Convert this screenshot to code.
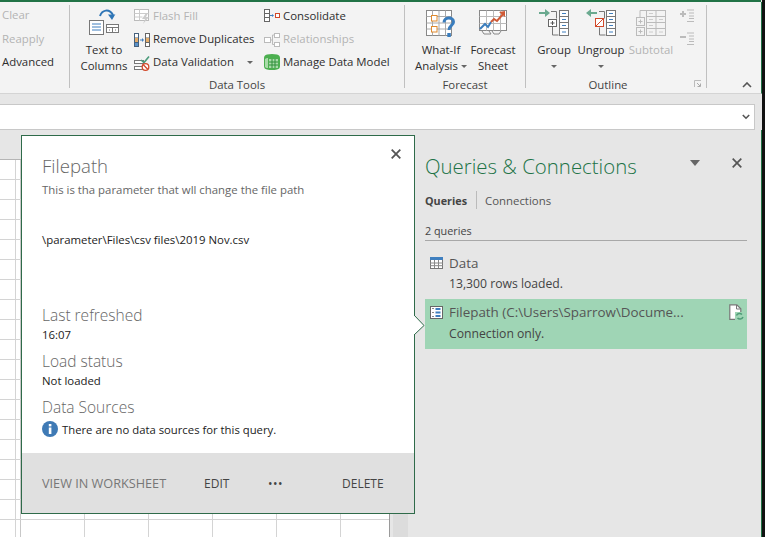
<template>
  <div class="app">
    <div class="topline"></div>
    <div class="ribbon">
      <section class="grp g-sort">
        <span class="off">Clear</span>
        <span class="off">Reapply</span>
        <span>Advanced</span>
      </section>

      <section class="grp g-tools">
        <div class="grp-body">
          <div class="big ttc">
            <svg viewBox="89 8 31 27" width="31" height="27">
              <rect x="89.5" y="19.5" width="14" height="14" fill="#fff" stroke="#777"/>
              <path d="M92 23h9M92 26h9M92 29h9" stroke="#3f7fbf" fill="none"/>
              <rect x="106.5" y="23.5" width="12" height="8" fill="#fff" stroke="#777"/>
              <path d="M106.5 26.5h12M112.5 26.5v5M109 29h1M115 29h1" stroke="#777" fill="none"/>
              <path d="M100 15c2-6 9-8 13-1" stroke="#2e75b6" stroke-width="2" fill="none"/>
              <path d="M108 13.5h7.5v-.5L112 19z" fill="#2e75b6"/>
            </svg>
            <span class="lb">Text to<br>Columns</span>
          </div>
          <div class="col col-a">
            <div class="row off">
              <svg viewBox="134 8 16 16" width="16" height="16">
                <rect x="134.5" y="8.5" width="14" height="11" fill="#fff" stroke="#bbb"/>
                <path d="M134.5 12.5h14M134.5 16h8M139.5 8.5v11" stroke="#ccc" fill="none"/>
                <path d="M146 12l-4 6h3l-2 5 6-7h-3l2-4z" fill="#ccc"/>
              </svg>
              <span>Flash Fill</span>
            </div>
            <div class="row">
              <svg viewBox="134 30 16 16" width="16" height="16">
                <rect x="134" y="31" width="5" height="14" fill="#46617d"/>
                <rect x="145" y="31" width="5" height="14" fill="#666"/>
                <rect x="135" y="32" width="3" height="3.5" fill="#fff"/>
                <rect x="135" y="36" width="3" height="4" fill="#e5ad6a"/>
                <rect x="135" y="41" width="3" height="3" fill="#5b92c9"/>
                <rect x="146" y="32" width="3" height="3.5" fill="#fff"/>
                <rect x="146" y="36" width="3" height="4" fill="#e5ad6a"/>
                <rect x="146" y="41" width="3" height="3" fill="#fff"/>
                <path d="M140 38h3" stroke="#3f7fbf"/>
                <path d="M142 36l2 2-2 2z" fill="#3f7fbf"/>
              </svg>
              <span>Remove Duplicates</span>
            </div>
            <div class="row">
              <svg viewBox="134 53 16 16" width="16" height="16">
                <rect x="134.5" y="58.5" width="9" height="3" fill="#fff" stroke="#777"/>
                <rect x="134.5" y="64.5" width="8" height="3" fill="#fff" stroke="#777"/>
                <path d="M141 58l3 2.500 5-6" stroke="#4c9c7c" stroke-width="1.600" fill="none"/>
                <circle cx="145.500" cy="65" r="3.300" fill="#fff" stroke="#d2492a" stroke-width="1.300"/>
                <path d="M143.300 62.800l4.400 4.400" stroke="#d2492a" stroke-width="1.300"/>
              </svg>
              <span>Data Validation</span>
              <i class="caret dv"></i>
            </div>
          </div>
          <div class="col col-b">
            <div class="row">
              <svg viewBox="264 8 16 16" width="16" height="16">
                <rect x="264.500" y="8.500" width="5" height="4" fill="#fff" stroke="#666"/>
                <rect x="264.500" y="12.500" width="5" height="4" fill="#fff" stroke="#666"/>
                <rect x="264.500" y="16.500" width="5" height="4" fill="#fff" stroke="#666"/>
                <path d="M270 14.500h2" stroke="#3f7fbf"/>
                <path d="M272 13l2 1.500-2 1.500z" fill="#3f7fbf"/>
                <rect x="275.500" y="12.500" width="4" height="4" fill="#fff" stroke="#d2492a"/>
              </svg>
              <span>Consolidate</span>
            </div>
            <div class="row off">
              <svg viewBox="264 30 16 16" width="16" height="16">
                <rect x="264.500" y="35.500" width="6" height="5" fill="#fff" stroke="#bbb"/>
                <rect x="274.500" y="31.500" width="5" height="4" fill="#fff" stroke="#bbb"/>
                <rect x="274.500" y="40.500" width="5" height="4" fill="#fff" stroke="#bbb"/>
                <path d="M270.500 38h2v-5h2M272.500 38v4.500h2" stroke="#bbb" fill="none"/>
              </svg>
              <span>Relationships</span>
            </div>
            <div class="row">
              <svg viewBox="264 53 16 17" width="16" height="17">
                <path d="M264 57q0-3 3-3.500 5-1 10 0 3 .5 3 3.500v8q0 3-3 3.500-5 1-10 0-3-.5-3-3.500z" fill="#4caf50"/>
                <path d="M269 58h9v9h-9z" fill="#a9dba9"/>
                <path d="M269 61h9M269 64h9M272 58v9M275 58v9" stroke="#2f8f3a" fill="none"/>
                <path d="M265 58c1-1 2-1 3-1v10c-1 0-2 0-3-1z" fill="#a9dba9"/>
              </svg>
              <span>Manage Data Model</span>
            </div>
          </div>
        </div>
        <div class="grp-title">Data Tools</div>
      </section>

      <section class="grp g-fore">
        <div class="grp-body">
          <div class="big whatif">
            <svg viewBox="428 9 30 31" width="30" height="31">
              <rect x="428.500" y="10.500" width="25" height="25" fill="#fff" stroke="#888"/>
              <path d="M428.500 16.500h25M428.500 23h25M428.500 29h25M434.500 10.500v25M441 10.500v25M447.500 10.500v25" stroke="#aaa" fill="none"/>
              <rect x="433.500" y="15.500" width="5.500" height="5.500" fill="#fff" stroke="#e08a2e"/>
              <rect x="433.500" y="26.500" width="5.500" height="5.500" fill="#fff" stroke="#e08a2e"/>
              <path d="M446 22.500c0-6 9.500-6 9.500-.5 0 3.500-4.500 3.500-4.500 8" stroke="#3a7dbd" stroke-width="3" fill="none"/>
              <rect x="449.300" y="33" width="3.500" height="4" fill="#3a7dbd"/>
            </svg>
            <span class="lb">What-If<br>Analysis<i class="caret inl"></i></span>
          </div>
          <div class="big forecast">
            <svg viewBox="479 9 29 27" width="29" height="27">
              <rect x="479.500" y="10.500" width="27" height="20" fill="#fff" stroke="#888"/>
              <path d="M479.500 16.500h27M479.500 23.500h27M486.500 10.500v20M493.500 10.500v20M500.500 10.500v20" stroke="#bbb" fill="none"/>
              <path d="M480 29l5-5 3 3 3-5" stroke="#3a7dbd" stroke-width="2" fill="none"/>
              <path d="M491 22l3-3 3 2 7-8" stroke="#cf5a37" stroke-width="2" fill="none"/>
              <path d="M499 12l6-1v6z" fill="#cf5a37"/>
              <path d="M482 31l2 3h7l-2-3M492 31l2 3h5l2-3" stroke="#888" fill="none"/>
            </svg>
            <span class="lb">Forecast<br>Sheet</span>
          </div>
        </div>
        <div class="grp-title">Forecast</div>
      </section>

      <section class="grp g-outline">
        <div class="grp-body">
          <div class="big group">
            <svg viewBox="539 9 30 27" width="30" height="27">
              <path d="M539 13h9" stroke="#6aa98f" stroke-width="2"/>
              <path d="M545 9l5 4-5 4z" fill="#6aa98f"/>
              <path d="M551 11.500h5.500v7M552.500 26.500v8.500h6" stroke="#777" fill="none"/>
              <rect x="548.500" y="19.500" width="8" height="7" fill="#fff" stroke="#666"/>
              <path d="M550.500 23h4M552.500 21v4" stroke="#555"/>
              <rect x="559.500" y="10.500" width="9" height="25" fill="#fff" stroke="#777"/>
              <path d="M559.500 16.500h9M559.500 22.500h9M559.500 28.500h9" stroke="#777"/>
              <path d="M562 13.500h4M562 19.500h4M562 25.500h4M562 32h4" stroke="#3f7fbf"/>
            </svg>
            <span class="lb">Group</span>
            <i class="caret under"></i>
          </div>
          <div class="big ungroup">
            <svg viewBox="587 9 31 27" width="31" height="27">
              <path d="M589 13h9" stroke="#6aa98f" stroke-width="2"/>
              <path d="M592 9l-5 4 5 4z" fill="#6aa98f"/>
              <path d="M600 11.500h5.500v7M600.500 27.500v7.500h6" stroke="#777" fill="none"/>
              <rect x="596.500" y="18.500" width="8" height="8" fill="#fff" stroke="#d2492a"/>
              <path d="M597 26l7-7" stroke="#d2492a"/>
              <rect x="607.500" y="10.500" width="9" height="25" fill="#fff" stroke="#777"/>
              <path d="M607.500 16.500h9M607.500 22.500h9M607.500 28.500h9" stroke="#777"/>
              <path d="M610 13.500h4M610 19.500h4M610 25.500h4M610 32h4" stroke="#3f7fbf"/>
            </svg>
            <span class="lb">Ungroup</span>
            <i class="caret under"></i>
          </div>
          <div class="big subtotal off">
            <svg viewBox="637 9 30 28" width="30" height="28">
              <rect x="637.500" y="17.500" width="8" height="8" fill="#f3f3f3" stroke="#bbb"/>
              <rect x="637.500" y="27.500" width="8" height="8" fill="#f3f3f3" stroke="#bbb"/>
              <path d="M639.500 21.500h4M641.500 19.500v4M639.500 31.500h4M641.500 29.500v4M641 10.500h6M641 17v-6.500" stroke="#bbb" fill="none"/>
              <rect x="647.500" y="10.500" width="19" height="25" fill="#f3f3f3" stroke="#bbb"/>
              <path d="M647.500 16.500h19M647.500 22.500h19M647.500 28.500h19M657 10.500v25" stroke="#bbb" fill="none"/>
              <path d="M650 13.500h4M660 19.500h4M650 25.500h4M660 32h4M650 19.500h4M650 32h4" stroke="#ccc"/>
            </svg>
            <span class="lb">Subtotal</span>
          </div>
          <div class="mini">
            <svg viewBox="681 8 15 14" width="15" height="14">
              <path d="M681 13h6M684 10v6" stroke="#bbb" stroke-width="2"/>
              <path d="M688 9h7M690 12h5M690 15h5M690 17.500h5M688 20.500h7" stroke="#bbb"/>
            </svg>
            <svg viewBox="681 31 15 14" width="15" height="14">
              <path d="M681 36h6" stroke="#bbb" stroke-width="2"/>
              <path d="M688 32h7M690 35h5M690 38h5M690 40.500h5M688 43.500h7" stroke="#bbb"/>
            </svg>
          </div>
        </div>
        <div class="grp-title outline-title">Outline</div>
        <svg class="launcher" viewBox="0 0 8 8" width="8" height="8">
          <path d="M.5 7V.5H7" stroke="#bbb" fill="none"/>
          <path d="M3 3l3 3M6.500 3.500v3h-3" stroke="#aaa" fill="none"/>
        </svg>
      </section>

      <div class="collapse">
        <svg viewBox="0 0 10 6" width="10" height="6"><path d="M1 5l4-4 4 4" stroke="#555" stroke-width="1.600" fill="none"/></svg>
      </div>
    </div>

    <div class="gap"></div>
    <div class="fbar">
      <div class="fbar-in">
        <svg viewBox="0 0 8 6" width="8" height="6"><path d="M.8 1l3.200 3.200L7.200 1" stroke="#555" stroke-width="1.600" fill="none"/></svg>
      </div>
    </div>

    <main class="work">
      <div class="sheet">
        <div class="cols"></div>
        <div class="cells"></div>
        <div class="vscroll"><div class="thumb"></div></div>
      </div>

      <aside class="panel">
        <div class="p-head">
          <h1>Queries &amp; Connections</h1>
          <i class="p-drop"></i>
          <svg class="p-x" viewBox="0 0 10 10" width="10" height="10"><path d="M.7.7l8.600 8.600M9.300.7L.7 9.300" stroke="#555" stroke-width="1.700"/></svg>
        </div>
        <div class="tabs">
          <b>Queries</b>
          <i></i>
          <span>Connections</span>
        </div>
        <div class="count">2 queries</div>
        <div class="item first">
          <div class="i-top">
            <svg viewBox="0 0 13 12" width="13" height="12">
              <rect x=".5" y=".5" width="12" height="11" fill="#fff" stroke="#777"/>
              <rect x="0" y="0" width="13" height="3" fill="#3f7fbf"/>
              <path d="M4.500 3v8M8.500 3v8M0 6h13M0 8.700h13" stroke="#888"/>
            </svg>
            <span class="i-name">Data</span>
          </div>
          <div class="i-sub">13,300 rows loaded.</div>
        </div>
        <div class="item sel">
          <div class="i-top">
            <svg viewBox="0 0 13 13" width="13" height="13">
              <rect x=".5" y=".5" width="12" height="12" fill="#fff" stroke="#666"/>
              <path d="M5.500 3h5M5.500 6.500h5M5.500 10h5" stroke="#3f7fbf" stroke-width="2"/>
              <path d="M2 2.500h2M2 6.500h2M2 10.500h2" stroke="#888"/>
            </svg>
            <span class="i-name">Filepath (C:\Users\Sparrow\Docume...</span>
          </div>
          <div class="i-sub">Connection only.</div>
          <svg class="doc" viewBox="0 0 15 17" width="15" height="17">
            <path d="M.8.800h7l4 4v10.500H.8z" fill="#fff" stroke="#777" stroke-width="1.200"/>
            <path d="M7.500 1v4h4" fill="none" stroke="#777"/>
            <rect x="6" y="8" width="9" height="9" fill="#9fd5b5"/>
            <path d="M7.500 11.500c1-2.500 4-2.500 5.500-1M14 13c-1 2.500-4 2.500-5.500 1" stroke="#4f9c77" stroke-width="1.500" fill="none"/>
          </svg>
        </div>
      </aside>

      <div class="pop">
        <svg class="x" viewBox="0 0 10 10" width="10" height="10"><path d="M.7.7l8.600 8.600M9.300.7L.7 9.300" stroke="#555" stroke-width="1.800"/></svg>
        <div class="pop-body">
          <h2>Filepath</h2>
          <p class="desc">This is tha parameter that wll change the file path</p>
          <p class="path">\parameter\Files\csv files\2019 Nov.csv</p>
          <h3 class="h-ref">Last refreshed</h3>
          <p class="val">16:07</p>
          <h3 class="h-load">Load status</h3>
          <p class="val">Not loaded</p>
          <h3 class="h-src">Data Sources</h3>
          <div class="note">
            <svg viewBox="0 0 16 16" width="16" height="16">
              <circle cx="8" cy="8" r="8" fill="#3f7ab5"/>
              <rect x="6.800" y="3" width="2.600" height="2.400" fill="#fff"/>
              <rect x="6.800" y="6.500" width="2.600" height="6.500" fill="#fff"/>
            </svg>
            <span>There are no data sources for this query.</span>
          </div>
        </div>
        <div class="pop-foot">
          <span class="f-view">VIEW IN WORKSHEET</span>
          <span class="f-edit">EDIT</span>
          <span class="f-more">•••</span>
          <span class="f-del">DELETE</span>
        </div>
        <svg class="arrow" viewBox="0 0 11 21" width="11" height="21">
          <path d="M0 0l10 10.500L0 20" fill="#fff" stroke="#2f6b4a"/>
        </svg>
      </div>
    </main>
  </div>
</template>

<style>
html, body { margin: 0; background: #e6e6e6; overflow: hidden; }
</style>

<style scoped>
.app {
  width: 765px; height: 537px; overflow: hidden; position: relative;
  display: flex; flex-direction: column;
  font-family: "Open Sans", "Noto Sans", sans-serif;
  font-size: 11.4px; color: #2e2e2e; background: #e6e6e6;
  box-sizing: border-box; border-right: 3px solid #111;
}
h1, h2, h3, p { margin: 0; font-weight: 400; }
.topline { height: 2px; background: #217346; flex: none; margin-right: 1px; }
.ribbon { flex: none; display: flex; background: #f3f3f3; border-bottom: 1px solid #d4d4d4; border-right: 1px solid #217346; box-sizing: border-box; height: 92px; }
.off { color: #b4b4b4; }
.grp { position: relative; display: flex; flex-direction: column; margin-top: 3px; height: 83px; border-right: 1px solid #c0c0c0; }
.grp-body { display: flex; height: 72px; flex: none; }
.grp-title { text-align: center; line-height: 16px; color: #444; height: 16px; flex: none; }
.outline-title { padding-right: 16px; }

.g-sort { padding-left: 2px; box-sizing: border-box; width: 70px; height: 83px; }
.g-sort span { line-height: 16px; height: 23.500px; padding-top: 2px; box-sizing: border-box; display: block; }

.g-tools { width: 334px; }
.g-fore { width: 120px; }
.g-outline { width: 180px; }

.big { display: flex; flex-direction: column; align-items: center; position: relative; white-space: nowrap; }
.big svg { display: block; margin-top: 4px; }
.lb { text-align: center; line-height: 16px; position: absolute; top: 37px; left: 50%; transform: translateX(-50%); }
.ttc { width: 52px; margin-left: 8px; }
.col { display: flex; flex-direction: column; }
.col-a { margin-left: 4px; width: 130px; }
.row { display: flex; align-items: center; height: 23px; gap: 3px; white-space: nowrap; }
.row svg { flex: none; }
.row span { margin-bottom: 2px; }
.caret { display: block; width: 0; height: 0; border: 3px solid transparent; border-top: 3.500px solid #666; border-bottom: 0; }
.dv { margin-left: 10px; }
.inl { display: inline-block; margin-left: 3px; vertical-align: 2px; }
.under { position: absolute; top: 60px; left: 50%; margin-left: -3px; }

.whatif { width: 52px; margin-left: 10px; }
.forecast { width: 52px; }
.group { width: 40px; margin-left: 8px; }
.ungroup { width: 48px; margin-left: 3px; }
.subtotal { width: 50px; margin-left: 1px; }
.mini { display: flex; flex-direction: column; gap: 9px; margin-left: 4px; padding-top: 4px; }
.launcher { position: absolute; right: 4px; bottom: 0; }
.collapse { flex: 1; display: flex; align-items: flex-end; justify-content: flex-end; padding: 0 9px 5px 0; }

.gap { height: 10px; flex: none; }
.fbar { height: 26px; flex: none; padding-right: 7px; }
.fbar-in { height: 26px; box-sizing: border-box; background: #fff; border-top: 1px solid #c8c8c8; border-bottom: 1px solid #c8c8c8; border-right: 1px solid #c8c8c8; display: flex; align-items: center; justify-content: flex-end; padding-right: 4px; }

.work { flex: 1; display: flex; position: relative; min-height: 0; }
.sheet { width: 411px; flex: none; position: relative; background: #fff; }
.cols { height: 29px; background: #e6e6e6; border-bottom: 1px solid #b5b5b5; }
.cells {
  position: absolute; left: 0; top: 30px; right: 22px; bottom: 0;
  background-color: #fff;
  background-image:
    repeating-linear-gradient(to bottom, transparent 0 19px, #d4d4d4 19px 20px),
    linear-gradient(to right, transparent 20px, #c8c8c8 20px 21px, transparent 21px),
    repeating-linear-gradient(to right, transparent 0 63px, #d4d4d4 63px 64px);
  background-position: 0 0, 0 0, 21px 0;
}
.vscroll { position: absolute; right: 0; top: 30px; bottom: 0; width: 22px; box-sizing: border-box; background: #e6e6e6; border-left: 1px solid #9a9a9a; display: flex; justify-content: center; padding-top: 330px; }
.thumb { width: 15px; flex: none; background: #dcdcdc; height: 200px; }

.panel { flex: 1; position: relative; padding: 0 14px; border-right: 1px solid #217346; box-sizing: border-box; }
.p-head { height: 60px; position: relative; }
.p-head h1 { padding-top: 19px; font-size: 20.400px; line-height: 34px; color: #217346; font-weight: 300; white-space: nowrap; }
.p-drop { position: absolute; right: 47px; top: 30px; border: 5px solid transparent; border-top: 6px solid #666; border-bottom: 0; }
.p-x { position: absolute; right: 5px; top: 28px; }
.tabs { display: flex; align-items: center; height: 20px; }
.tabs b { font-weight: 700; color: #444; font-size: 10.800px; }
.tabs i { width: 1px; height: 18px; background: #bbb; margin: 0 8px 0 9px; }
.tabs span { color: #555; }
.count { margin-top: 10px; height: 20px; line-height: 21px; border-bottom: 1px solid #a8a8a8; color: #444; font-size: 10.800px; }
.item { height: 50px; padding-left: 5px; position: relative; }
.first { margin-top: 8px; }
.i-top { display: flex; align-items: center; gap: 6px; height: 26px; padding-top: 1px; box-sizing: border-box; }
.i-name { font-size: 13.400px; color: #555; white-space: nowrap; }
.i-sub { margin-left: 19px; line-height: 18px; color: #444; font-size: 12.200px; }
.sel { background: #9fd5b5; }
.sel .i-top { padding-top: 0; }
.doc { position: absolute; right: 3px; top: 5px; }

.pop {
  position: absolute; left: 21px; top: 5px; width: 394px; height: 379px; box-sizing: border-box;
  background: #fff; border: 1px solid #2f6b4a; display: flex; flex-direction: column;
}
.x { position: absolute; right: 13px; top: 13px; }
.pop-body { flex: 1; padding-left: 20px; color: #222; }
.pop-body h2 { font-size: 18.600px; font-weight: 300; color: #666; line-height: 24px; margin-top: 18px; }
.desc { color: #666; line-height: 18px; margin-top: 3px; }
.path { margin-top: 32px; line-height: 18px; color: #222; }
.pop-body h3 { font-size: 15.500px; font-weight: 300; color: #666; line-height: 22px; }
.pop-body .h-ref { margin-top: 55px; }
.pop-body .h-load { margin-top: 6px; }
.pop-body .h-src { margin-top: 6px; }
.val { line-height: 18px; }
.note { display: flex; align-items: center; gap: 4px; height: 18px; margin-top: 2px; font-size: 11.300px; }
.note svg { flex: none; }
.pop-foot { height: 60px; flex: none; background: #e0e0e0; display: flex; align-items: center; position: relative; color: #444; font-size: 12px; }
.f-view { margin-left: 20px; color: #777; width: 162px; font-size: 12.700px; }
.f-edit { width: 64px; }
.f-more { width: 74px; letter-spacing: .5px; }
.arrow { position: absolute; left: 392px; top: 179px; }
</style>
